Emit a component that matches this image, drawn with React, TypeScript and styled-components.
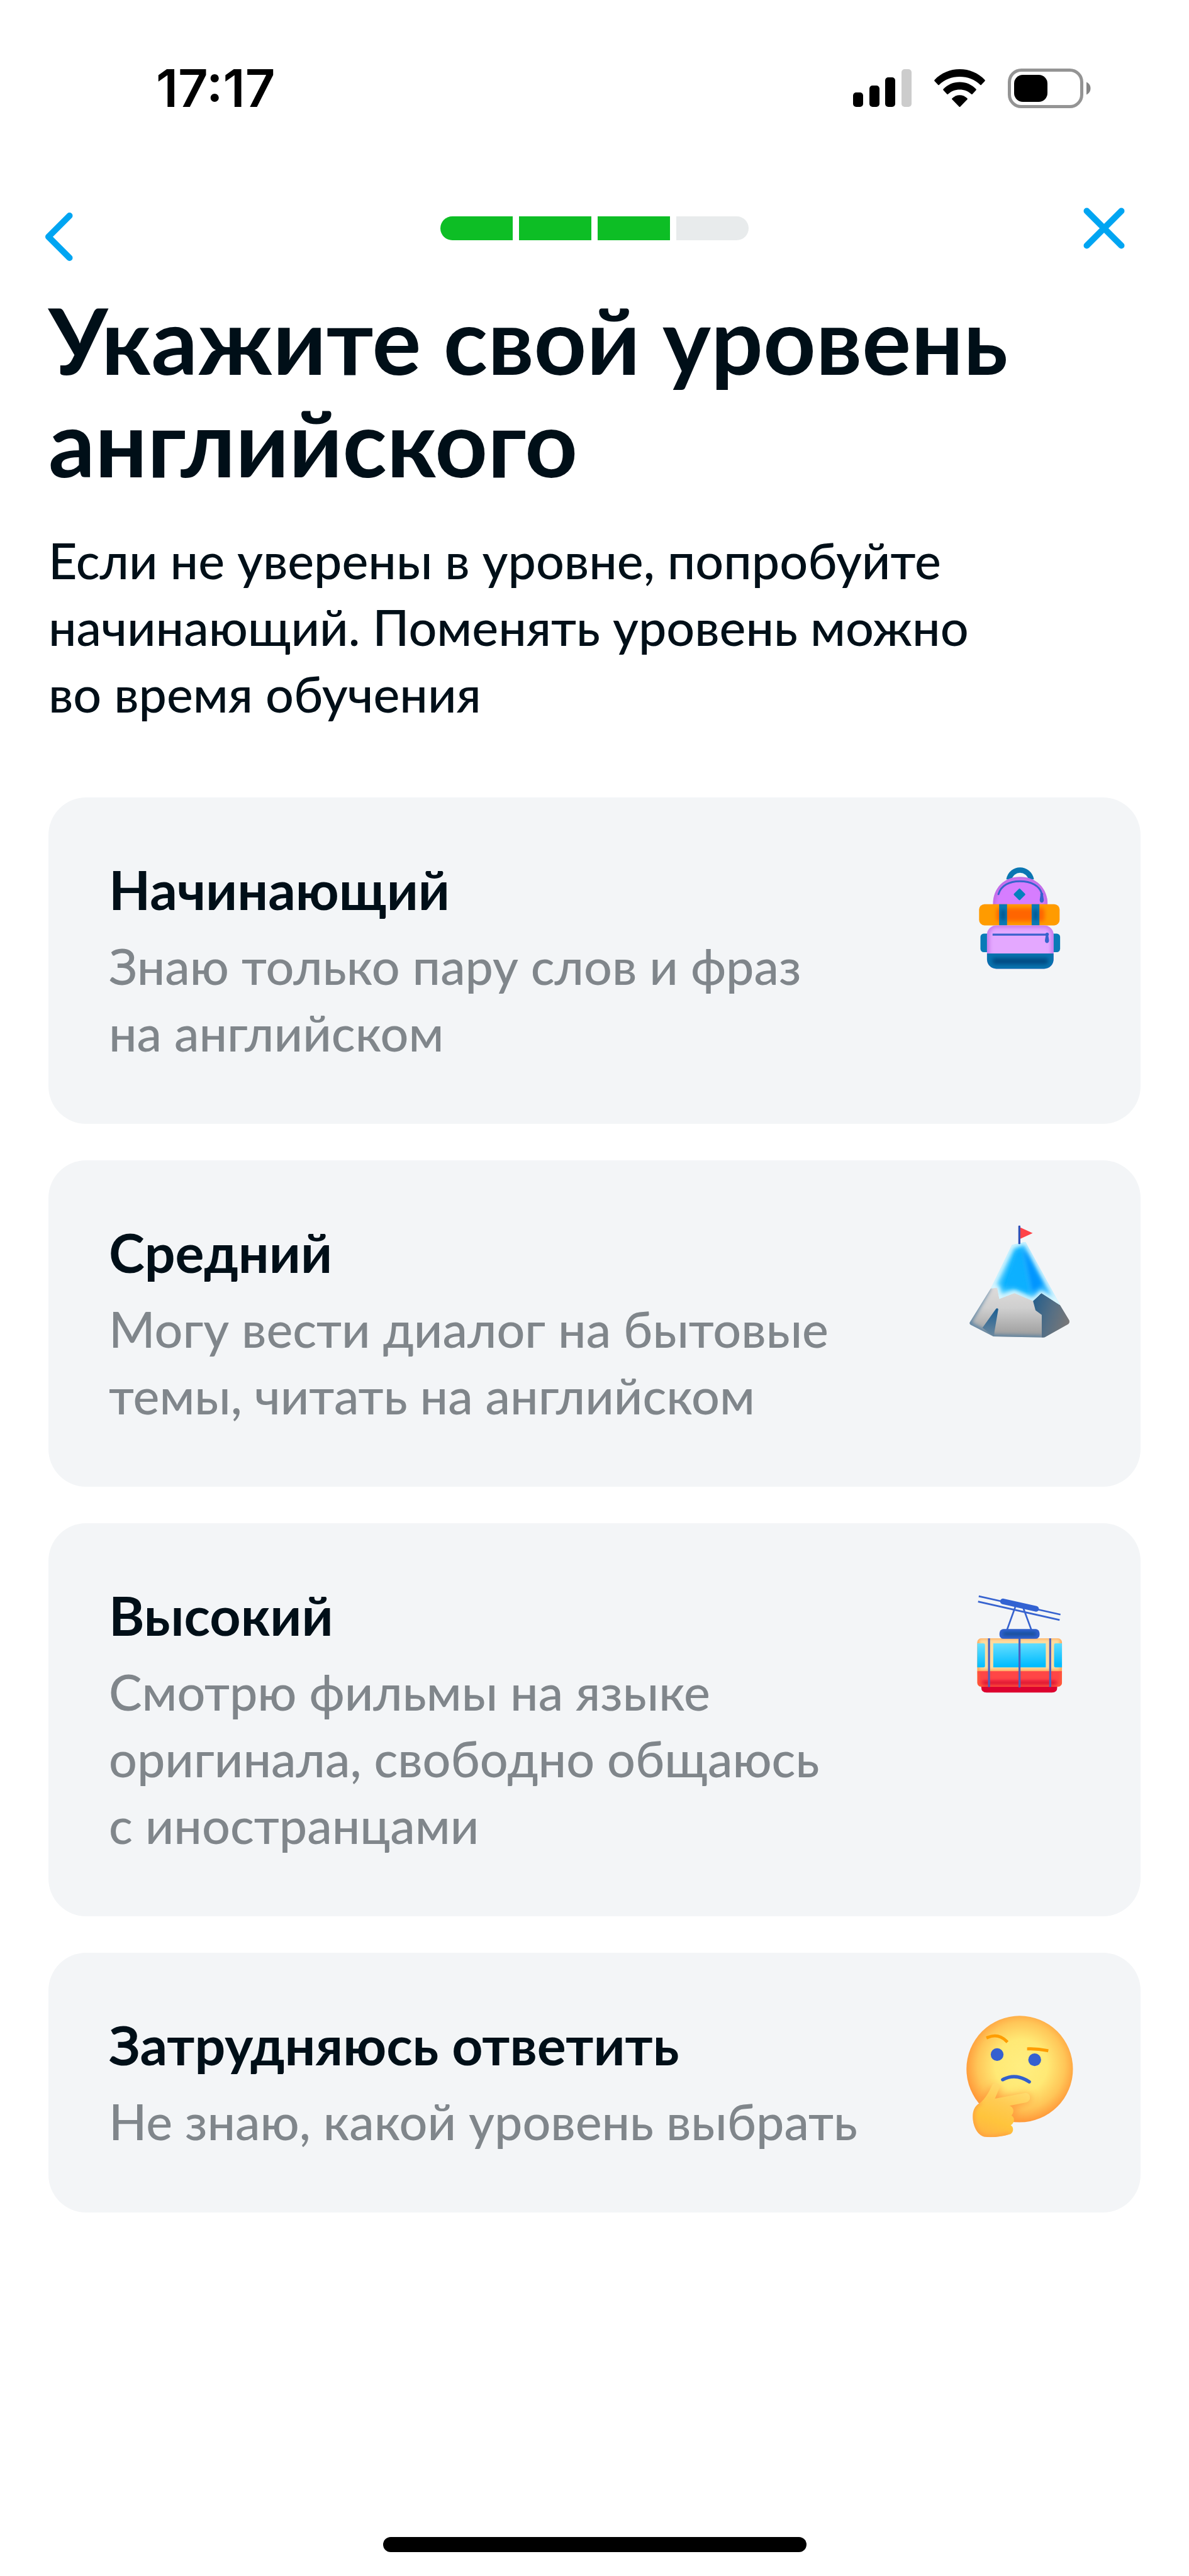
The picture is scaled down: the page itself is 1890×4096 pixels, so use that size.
import React from "react";
import styled, { createGlobalStyle } from "styled-components";

const GlobalStyle = createGlobalStyle`
  *, *::before, *::after { box-sizing: border-box; }
  body {
    margin: 0;
    background: #fff;
    color: #000f18;
    font-family: Lato, "Noto Sans", sans-serif;
  }
  h1, p, ul { margin: 0; padding: 0; }
  button { border: 0; padding: 0; background: none; color: inherit; font: inherit; cursor: pointer; }
  svg { display: block; flex: none; overflow: visible; }
`;

const Screen = styled.div`
  min-height: 100vh;
  display: flex;
  flex-direction: column;
`;

const StatusBar = styled.div`
  height: 280px;
  padding: 0 156px 0 248px;
  display: flex;
  align-items: center;
  justify-content: space-between;
  color: #000;
`;

const Clock = styled.time`
  font-family: Inter, sans-serif;
  font-size: 83px;
  font-weight: 600;
  line-height: 96px;
`;

const StatusIcons = styled.div`
  display: flex;
  align-items: center;
  gap: 36px;
`;

const Header = styled.header`
  height: 166px;
  padding: 0 102px 0 72px;
  display: grid;
  grid-template-columns: 1fr auto 1fr;
  align-items: center;
`;

const IconButton = styled.button<{ $end?: boolean }>`
  justify-self: ${(p) => (p.$end ? "end" : "start")};
  color: #00a5f2;
`;

const Progress = styled.div`
  display: flex;
  gap: 10px;
  border-radius: 19px;
  overflow: hidden;
  margin-left: 30px;
`;

const Step = styled.span<{ $done: boolean }>`
  width: 115px;
  height: 38px;
  background: ${(p) => (p.$done ? "#0dbe25" : "#e8ebec")};
`;

const Main = styled.main`
  padding: 12px 77px 0;
  display: flex;
  flex-direction: column;
`;

const Title = styled.h1`
  font-size: 146px;
  font-weight: 700;
  line-height: 163px;
`;

const Lead = styled.p`
  margin-top: 54px;
  font-size: 79px;
  font-weight: 500;
  line-height: 106px;
`;

const Levels = styled.ul`
  margin-top: 112px;
  display: flex;
  flex-direction: column;
  gap: 58px;
  list-style: none;
`;

const LevelCard = styled.button`
  width: 100%;
  padding: 96px 96px 92px;
  display: flex;
  align-items: flex-start;
  justify-content: space-between;
  gap: 96px;
  border-radius: 60px;
  background: #f3f5f7;
  text-align: left;
`;

const LevelText = styled.span`
  flex: 1;
  display: flex;
  flex-direction: column;
  gap: 19px;
`;

const LevelName = styled.span`
  font-size: 86px;
  font-weight: 700;
  line-height: 100px;
`;

const LevelNote = styled.span`
  max-width: 1260px;
  color: #80868b;
  font-size: 79px;
  font-weight: 500;
  line-height: 106px;
`;

const HomeArea = styled.footer`
  margin-top: auto;
  padding-bottom: 38px;
  display: flex;
  justify-content: center;
`;

const HomeIndicator = styled.span`
  width: 673px;
  height: 24px;
  border-radius: 12px;
  background: #000;
`;

function Signal() {
  return (
    <svg width="93" height="60" viewBox="0 0 93 60" aria-hidden="true">
      <rect x="0" y="37" width="16" height="23" rx="5" />
      <rect x="26" y="26" width="16" height="34" rx="5" />
      <rect x="51" y="13" width="16" height="47" rx="5" />
      <rect x="77" y="0" width="16" height="60" rx="5" fill="#ccc" />
    </svg>
  );
}

function Wifi() {
  return (
    <svg width="81" height="60" viewBox="0 0 81 60" aria-hidden="true">
      <path d="M0.6 17C11 6 25 0 40.500 0S70 6 80.400 17c.6.700.6 1.300 0 2l-5.400 5.800c-.7.700-1.300.7-2 0C64.500 16.500 53 12 40.500 12S16.500 16.500 8 24.800c-.7.700-1.300.7-2 0L.6 19c-.6-.7-.6-1.300 0-2Z" />
      <path d="M14.600 31.500C21.500 24.500 30.500 20.600 40.500 20.600S59.500 24.500 66.400 31.500c.6.700.6 1.300 0 2l-5.600 6c-.7.700-1.300.7-2 0C54 35 47.500 32.500 40.500 32.500S27 35 22.200 39.500c-.7.700-1.300.7-2 0l-5.600-6c-.6-.7-.6-1.300 0-2Z" />
      <path d="M28.600 46.300C32 43 36 41.200 40.500 41.200S49 43 52.400 46.300c.6.600.6 1.200 0 1.900L41.500 59.500c-.7.700-1.300.7-2 0L28.600 48.200c-.6-.7-.6-1.300 0-1.900Z" />
    </svg>
  );
}

function Battery() {
  return (
    <svg width="132" height="63" viewBox="0 0 132 63" aria-hidden="true">
      <rect x="2.500" y="2.500" width="115" height="58" rx="19" fill="none" stroke="#949494" strokeWidth="5" />
      <rect x="10" y="10" width="53" height="43" rx="14" />
      <path d="M125 21.500c4 1.800 6.500 5.500 6.500 10s-2.500 8.200-6.500 10Z" fill="#858585" />
    </svg>
  );
}

function BackIcon() {
  return (
    <svg width="44" height="106" viewBox="0 0 44 106" fill="none" stroke="currentColor" strokeWidth="10" strokeLinecap="round" strokeLinejoin="round" aria-hidden="true">
      <path d="M38.500 33 5 66.500 38.500 100" />
    </svg>
  );
}

function CloseIcon() {
  return (
    <svg width="66" height="66" viewBox="0 0 66 66" fill="none" stroke="currentColor" strokeWidth="10" strokeLinecap="round" aria-hidden="true">
      <path d="m5.500 5.500 55 55M60.500 5.500l-55 55" />
    </svg>
  );
}

function Backpack() {
  return (
    <svg width="192" height="192" viewBox="53 52 717 717" aria-hidden="true">
      <defs>
        <clipPath id="bp-top"><path d="M252 330C252 230 320 165 413 165S577 230 577 330Z" /></clipPath>
        <clipPath id="bp-low"><rect x="217" y="453" width="395" height="258" rx="56" /></clipPath>
        <clipPath id="bp-strap"><path d="M289 327h47v126h-47zM482 327h46v126h-46z" /></clipPath>
        <filter id="bp-blur" x="-30%" y="-60%" width="160%" height="220%"><feGaussianBlur stdDeviation="12" /></filter>
      </defs>
      <path d="M347 182C362 106 464 106 480 182" fill="none" stroke="#0a76b2" strokeWidth="32" />
      <g clipPath="url(#bp-top)">
        <rect x="240" y="150" width="350" height="190" fill="#d67dff" />
        <path d="M252 345C252 230 320 165 413 165S577 230 577 345" fill="none" stroke="#b866dc" strokeWidth="22" filter="url(#bp-blur)" />
      </g>
      <path d="M285 268C300 216 350 191 412 191 480 191 530 218 543 266" fill="none" stroke="#3564cc" strokeWidth="11" strokeLinecap="round" />
      <path d="M536 262h12l6 38c3 24-27 24-24 0Z" fill="#3564cc" />
      <circle cx="542" cy="269" r="9" fill="#3564cc" />
      <rect x="384" y="243" width="52" height="52" rx="6" transform="rotate(45 410 269)" fill="#0580bd" />
      <rect x="178" y="502" width="473" height="110" rx="20" fill="#0a7ab7" />
      <rect x="170" y="327" width="478" height="126" rx="32" fill="#ff9b00" />
      <rect x="274" y="350" width="284" height="80" rx="16" fill="#ff6500" filter="url(#bp-blur)" />
      <path d="M289 327h47v126h-47zM482 327h46v126h-46z" fill="#0a7ab5" />
      <g clipPath="url(#bp-strap)">
        <path d="M300 360h25v62h-25zM493 360h24v62h-24z" fill="#00508c" filter="url(#bp-blur)" />
      </g>
      <g clipPath="url(#bp-low)">
        <rect x="210" y="450" width="410" height="270" fill="#e4a8ff" />
        <rect x="217" y="453" width="395" height="300" rx="56" fill="none" stroke="#c273ea" strokeWidth="26" filter="url(#bp-blur)" />
        <rect x="210" y="620" width="410" height="100" fill="#0872ae" />
        <rect x="250" y="648" width="330" height="36" rx="12" fill="#004a82" filter="url(#bp-blur)" />
      </g>
      <path d="M250 508H578" stroke="#3b62cc" strokeWidth="12" />
      <path d="M568 500h11l6 40c3 24-27 24-24 0Z" fill="#3564cc" />
      <circle cx="574" cy="506" r="10" fill="#3564cc" />
    </svg>
  );
}

function Mountain() {
  return (
    <svg width="192" height="192" viewBox="53 46 717 717" aria-hidden="true">
      <defs>
        <clipPath id="mt-snow"><path d="M365 190 445 172 652 548 540 475 490 522 380 475 290 510 278 445 240 447Z" /></clipPath>
        <clipPath id="mt-rock"><path d="M240 447 278 445 290 510 380 475 490 522 540 475 650 546 704 636Q710 650 700 659L560 738Q556 740 545 740L255 733 120 664Q108 656 118 644Z" /></clipPath>
        <linearGradient id="mt-grey" x1="0" y1="0" x2="0" y2="1"><stop offset="0" stopColor="#dedcdb" /><stop offset="0.400" stopColor="#cfcfcf" /><stop offset="1" stopColor="#979797" /></linearGradient>
        <linearGradient id="mt-dark" x1="0" y1="0.200" x2="1" y2="0.600"><stop offset="0" stopColor="#275f8b" /><stop offset="0.500" stopColor="#566f84" /><stop offset="1" stopColor="#7c7876" /></linearGradient>
        <linearGradient id="mt-notch" x1="0" y1="0" x2="0" y2="1"><stop offset="0" stopColor="#1b5e92" /><stop offset="1" stopColor="#6c889e" /></linearGradient>
        <filter id="mt-blur" x="-30%" y="-30%" width="160%" height="160%"><feGaussianBlur stdDeviation="16" /></filter>
        <filter id="mt-soft" x="-30%" y="-30%" width="160%" height="160%"><feGaussianBlur stdDeviation="12" /></filter>
      </defs>
      <g clipPath="url(#mt-rock)">
        <rect x="100" y="440" width="620" height="310" fill="url(#mt-grey)" />
        <path d="M230 440 108 656 255 735 550 742" fill="none" stroke="#4b7ba2" strokeWidth="22" filter="url(#mt-soft)" />
        <path d="M190 682 270 570Q278 562 284 572L262 700 258 735Z" fill="url(#mt-notch)" />
        <path d="M540 475 652 546 720 650 560 745H542V605L505 578 490 522Z" fill="url(#mt-dark)" />
      </g>
      <g clipPath="url(#mt-snow)">
        <rect x="230" y="165" width="430" height="390" fill="#b5edff" />
        <path d="M385 215 432 195 500 460 470 490 380 445 310 465 290 420Z" fill="#00b0ff" stroke="#35c4ff" strokeWidth="24" filter="url(#mt-blur)" />
        <path d="M388 235 430 215 475 470 380 440 325 440Z" fill="#0fb0ff" filter="url(#mt-soft)" />
        <path d="M428 180 455 200 610 500 540 465 486 510Z" fill="#2ab4ff" filter="url(#mt-blur)" />
        <path d="M430 215 460 250 550 425 484 470Z" fill="#0095ff" filter="url(#mt-soft)" />
        <path d="M365 190 445 172 652 548 540 475 490 522 380 475 290 510 278 445 240 447Z" fill="none" stroke="#e2f8ff" strokeWidth="20" filter="url(#mt-soft)" />
      </g>
      <rect x="403" y="75" width="12" height="110" rx="4" fill="#2c4db5" />
      <path d="M415 86 488 120 415 153Z" fill="#ff4247" />
    </svg>
  );
}

function CableCar() {
  return (
    <svg width="192" height="192" viewBox="53 40 717 717" aria-hidden="true">
      <defs>
        <clipPath id="cc-cab"><rect x="159" y="365" width="503" height="287" rx="24" /></clipPath>
        <linearGradient id="cc-glass" x1="0" y1="0" x2="0.150" y2="1"><stop offset="0" stopColor="#6be0ff" /><stop offset="1" stopColor="#00bcff" /></linearGradient>
        <filter id="cc-blur" x="-20%" y="-150%" width="140%" height="400%"><feGaussianBlur stdDeviation="9" /></filter>
      </defs>
      <path d="M168 115 653 224M164 147 648 256M385 178 336 314M430 178 480 314" fill="none" stroke="#3763cf" strokeWidth="10" />
      <path d="M312 146 508 190" stroke="#3262d2" strokeWidth="34" strokeLinecap="round" />
      <path d="M183 640H634V656Q634 687 602 687H215Q183 687 183 656Z" fill="#dc002f" />
      <g clipPath="url(#cc-cab)">
        <rect x="159" y="365" width="503" height="287" fill="#ffdb9e" />
        <rect x="159" y="357" width="503" height="206" fill="none" stroke="#ffa052" strokeWidth="22" filter="url(#cc-blur)" />
        <path d="M150 395H196Q205 395 205 404V530Q205 538 196 538H150ZM254 395H566V538H254ZM670 395H624Q615 395 615 404V530Q615 538 624 538H670Z" fill="url(#cc-glass)" />
        <rect x="159" y="560" width="503" height="92" fill="#ff4646" />
        <path d="M159 565V652H662V565" fill="none" stroke="#ff6a2a" strokeWidth="12" filter="url(#cc-blur)" />
        <rect x="190" y="618" width="440" height="22" rx="10" fill="#dc0a30" filter="url(#cc-blur)" />
      </g>
      <path d="M229 365V654M410 360V657M592 365V654" stroke="#4a62c0" strokeWidth="12" />
      <rect x="291" y="310" width="238" height="58" rx="24" fill="#3060cc" />
      <rect x="312" y="330" width="196" height="18" rx="9" fill="#0f4c8e" filter="url(#cc-blur)" />
    </svg>
  );
}

function ThinkingFace() {
  return (
    <svg width="192" height="192" viewBox="53 98 717 717" aria-hidden="true">
      <defs>
        <radialGradient id="tf-face" gradientUnits="userSpaceOnUse" cx="420" cy="410" r="345"><stop offset="0" stopColor="#ffee80" /><stop offset="0.450" stopColor="#ffe975" /><stop offset="0.750" stopColor="#ffc658" /><stop offset="1" stopColor="#ff9234" /></radialGradient>
        <linearGradient id="tf-hand" x1="0.700" y1="0" x2="0.300" y2="1"><stop offset="0" stopColor="#ffe27a" /><stop offset="0.400" stopColor="#ffcb52" /><stop offset="0.700" stopColor="#ffc43c" /><stop offset="1" stopColor="#ffb243" /></linearGradient>
        <clipPath id="tf-clip"><circle cx="411" cy="430" r="316" /></clipPath>
        <clipPath id="tf-handclip"><path d="M245 530C256 505 292 508 292 540L264 606 440 572C476 566 486 618 450 628L350 648C372 655 384 680 362 706 382 716 384 748 358 764 378 774 376 812 350 818 300 834 240 838 200 832 150 820 125 740 134 690 142 655 155 642 180 628 205 604 225 575 245 530Z" /></clipPath>
        <filter id="tf-blur" x="-30%" y="-30%" width="160%" height="160%"><feGaussianBlur stdDeviation="24" /></filter>
        <filter id="tf-soft" x="-30%" y="-30%" width="160%" height="160%"><feGaussianBlur stdDeviation="12" /></filter>
      </defs>
      <circle cx="411" cy="430" r="316" fill="url(#tf-face)" />
      <g clipPath="url(#tf-clip)">
        <path d="M240 540 290 545 285 600 450 575C490 575 485 630 450 635L390 660 380 760 180 740 150 640Z" fill="#ff9a3c" opacity="0.850" filter="url(#tf-blur)" />
      </g>
      <path d="M222 242C260 226 300 232 332 264" fill="none" stroke="#ff9d00" strokeWidth="18" strokeLinecap="square" />
      <path d="M464 310C500 309 535 312 572 320" fill="none" stroke="#ff9d00" strokeWidth="18" strokeLinecap="square" />
      <circle cx="277" cy="344" r="38" fill="#3560d0" />
      <circle cx="500" cy="375" r="38" fill="#3560d0" />
      <path d="M310 493C360 466 415 470 468 506" fill="none" stroke="#3260cc" strokeWidth="20" strokeLinecap="round" />
      <g clipPath="url(#tf-handclip)">
        <rect x="120" y="500" width="370" height="345" fill="url(#tf-hand)" />
        <path d="M180 628C155 642 142 655 134 690 125 740 150 820 200 832 240 838 300 834 350 818" fill="none" stroke="#ff9a3c" strokeWidth="18" filter="url(#tf-soft)" />
      </g>
    </svg>
  );
}

const LEVELS = [
  { name: "Начинающий", note: "Знаю только пару слов и фраз на\u00a0английском", Icon: Backpack },
  { name: "Средний", note: "Могу вести диалог на бытовые темы, читать на английском", Icon: Mountain },
  { name: "Высокий", note: "Смотрю фильмы на языке оригинала, свободно общаюсь с\u00a0иностранцами", Icon: CableCar },
  { name: "Затрудняюсь ответить", note: "Не знаю, какой уровень выбрать", Icon: ThinkingFace },
];

const STEPS = [true, true, true, false];

export default function App() {
  return (
    <>
      <GlobalStyle />
      <Screen>
        <StatusBar>
          <Clock>17:17</Clock>
          <StatusIcons>
            <Signal />
            <Wifi />
            <Battery />
          </StatusIcons>
        </StatusBar>
        <Header>
          <IconButton type="button" aria-label="Назад">
            <BackIcon />
          </IconButton>
          <Progress role="progressbar" aria-label="Шаг" aria-valuemin={0} aria-valuemax={4} aria-valuenow={3}>
            {STEPS.map((done, i) => (
              <Step key={i} $done={done} />
            ))}
          </Progress>
          <IconButton type="button" aria-label="Закрыть" $end>
            <CloseIcon />
          </IconButton>
        </Header>
        <Main>
          <Title>Укажите свой уровень английского</Title>
          <Lead>Если не уверены в уровне, попробуйте начинающий. Поменять уровень можно во&nbsp;время обучения</Lead>
          <Levels>
            {LEVELS.map(({ name, note, Icon }) => (
              <li key={name}>
                <LevelCard type="button">
                  <LevelText>
                    <LevelName>{name}</LevelName>
                    <LevelNote>{note}</LevelNote>
                  </LevelText>
                  <Icon />
                </LevelCard>
              </li>
            ))}
          </Levels>
        </Main>
        <HomeArea>
          <HomeIndicator />
        </HomeArea>
      </Screen>
    </>
  );
}
